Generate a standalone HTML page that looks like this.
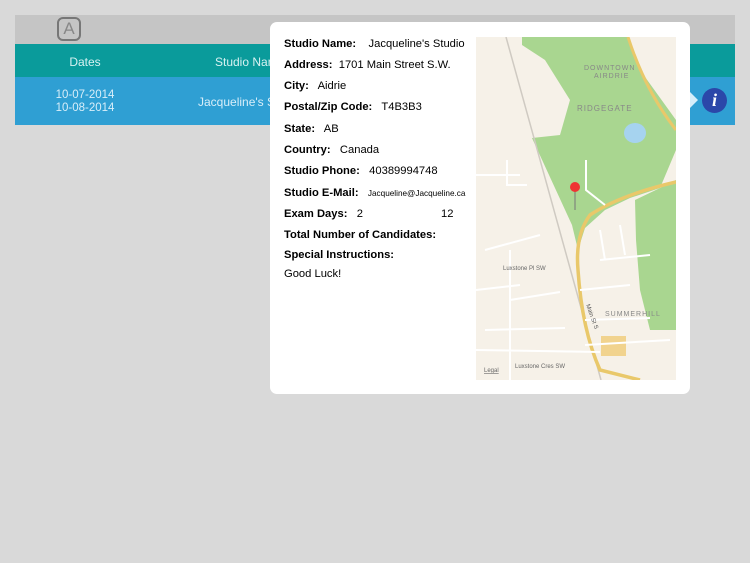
<!DOCTYPE html>
<html><head><style>
body{margin:0;width:750px;height:563px;background:#d9d9d9;position:relative;overflow:hidden;font-family:"Liberation Sans",sans-serif;}
.abs{position:absolute;}
.lbl{position:absolute;left:284px;font-size:11.2px;color:#000;}
.lbl b{font-weight:bold;}
</style></head><body>
<div class="abs" style="left:15px;top:15px;width:720px;height:29px;background:#c5c5c5"></div>
<div class="abs" style="left:57px;top:17px;width:24px;height:24px;box-sizing:border-box;border:2px solid #777;border-radius:6px;color:#888;font-size:17px;text-align:center;line-height:20px">A</div>
<div class="abs" style="left:15px;top:44px;width:720px;height:33px;background:#0a9b9b"></div>
<div class="abs" style="left:15px;top:77px;width:720px;height:48px;background:#2f9fd3"></div>
<div class="abs" style="left:15px;top:55px;width:140px;text-align:center;color:#d8f2f2;font-size:12px">Dates</div>
<div class="abs" style="left:215px;top:55px;color:#d8f2f2;font-size:12px">Studio Name</div>
<div class="abs" style="left:15px;top:89px;width:140px;text-align:center;color:#d8eef9;font-size:11.5px;line-height:13px">10-07-2014<br>10-08-2014</div>
<div class="abs" style="left:198px;top:95px;color:#d8eef9;font-size:12px">Jacqueline's Studio</div>
<div class="abs" style="left:690px;top:92px;width:0;height:0;border-top:8px solid transparent;border-bottom:8px solid transparent;border-left:8px solid #d5eefa"></div>
<div class="abs" style="left:702px;top:88px;width:25px;height:25px;border-radius:50%;background:#2b47a9;color:#fff;font-family:'Liberation Serif',serif;font-style:italic;font-weight:bold;font-size:18px;text-align:center;line-height:25px">i</div>

<div class="abs" style="left:270px;top:22px;width:420px;height:372px;background:#fff;border-radius:7px"></div>
<div class="lbl" style="top:38px"><b>Studio Name:</b>&nbsp;&nbsp;&nbsp; Jacqueline's Studio</div>
<div class="lbl" style="top:59px"><b>Address:</b>&nbsp; 1701 Main Street S.W.</div>
<div class="lbl" style="top:80px"><b>City:</b>&nbsp;&nbsp; Aidrie</div>
<div class="lbl" style="top:101px"><b>Postal/Zip Code:</b>&nbsp;&nbsp; T4B3B3</div>
<div class="lbl" style="top:123px"><b>State:</b>&nbsp;&nbsp; AB</div>
<div class="lbl" style="top:144px"><b>Country:</b>&nbsp;&nbsp; Canada</div>
<div class="lbl" style="top:165px"><b>Studio Phone:</b>&nbsp;&nbsp; 40389994748</div>
<div class="lbl" style="top:187px"><b>Studio E-Mail:</b>&nbsp;&nbsp; <span style="font-size:8.2px">Jacqueline@Jacqueline.ca</span></div>
<div class="lbl" style="top:208px"><b>Exam Days:</b>&nbsp;&nbsp; 2</div>
<div class="abs" style="left:441px;top:208px;font-size:11.2px">12</div>
<div class="lbl" style="top:229px"><b>Total Number of Candidates:</b></div>
<div class="lbl" style="top:249px"><b>Special Instructions:</b></div>
<div class="lbl" style="top:268px">Good Luck!</div>

<svg class="abs" style="left:476px;top:37px" width="200" height="343" viewBox="476 37 200 343">
<rect x="476" y="37" width="200" height="343" fill="#f6f1e8"/>
<polygon points="522,37 628,37 640,70 676,120 676,150 660,188 630,198 605,210 585,228 578,250 572,225 532,138 560,135 570,100 545,60 522,45" fill="#a9d690"/>
<polygon points="635,200 660,188 676,180 676,330 650,330 640,290 636,240" fill="#a9d690"/>
<ellipse cx="635" cy="133" rx="11" ry="10" fill="#a6d3ef"/>
<line x1="506" y1="37" x2="601" y2="380" stroke="#cfcac2" stroke-width="1.5"/>
<path d="M628,37 Q645,90 676,130" stroke="#e9c86a" stroke-width="3" fill="none"/>
<path d="M676,182 Q620,195 590,215 Q575,235 578,270 Q582,330 600,370 L640,380" stroke="#e9c86a" stroke-width="3.5" fill="none"/>
<rect x="601" y="336" width="25" height="20" fill="#f1d38e"/>
<g stroke="#fff" stroke-width="2" fill="none">
<path d="M476,175 L520,175 M507,160 L507,185 L527,185 M485,250 L540,235 M476,290 L520,285 M510,300 L560,292 M485,330 L565,328 M476,350 L600,352 M510,250 L510,380 M580,290 L630,285 M585,320 L650,318 M600,260 L650,255 M585,345 L670,340 M586,160 L586,190 L605,205 M600,230 L605,260 M620,225 L625,255"/>
</g>
<g font-family="Liberation Sans,sans-serif" fill="#888" font-size="7">
<text x="584" y="70" letter-spacing="1">DOWNTOWN</text>
<text x="594" y="78" letter-spacing="1">AIRDRIE</text>
<text x="577" y="111" letter-spacing="1" font-size="8">RIDGEGATE</text>
<text x="605" y="316" letter-spacing="1">SUMMERHILL</text>
<text x="503" y="270" fill="#666" font-size="6">Luxstone Pl SW</text>
<text x="515" y="368" fill="#666" font-size="6">Luxstone Cres SW</text>
<text x="484" y="372" fill="#666" font-size="6" text-decoration="underline">Legal</text>
<text x="586" y="305" fill="#555" font-size="6" transform="rotate(70 586 305)">Main St S</text>
</g>
<line x1="575" y1="190" x2="575" y2="210" stroke="#777" stroke-width="1"/>
<circle cx="575" cy="187" r="5" fill="#e33"/>
</svg>
</body></html>
